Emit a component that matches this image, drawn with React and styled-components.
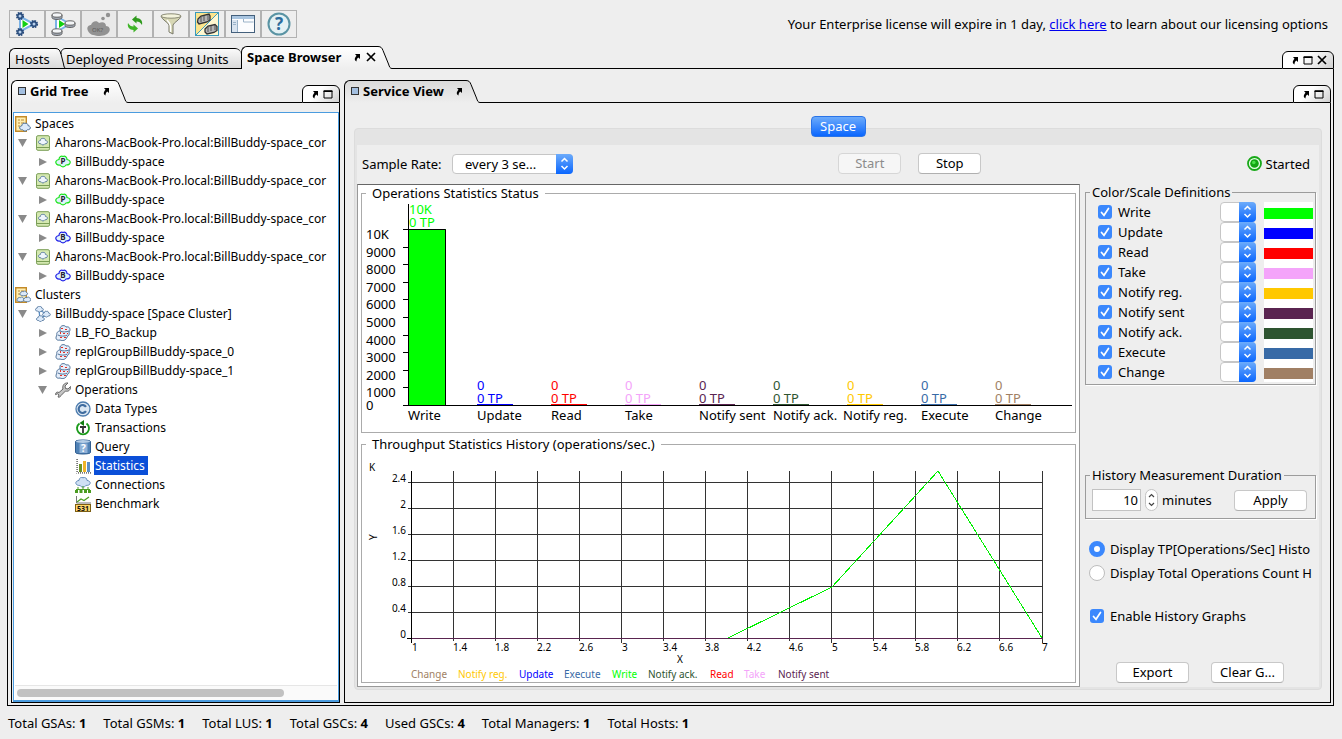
import React from "react";
import styled, { createGlobalStyle, css } from "styled-components";

const Global = createGlobalStyle`
  * { box-sizing: border-box; }
  body { margin: 0; background: #eeeeee; color: #000; font: 13px/16px "Noto Sans", "Open Sans", sans-serif; }
  button, select, input { font: inherit; color: inherit; }
  svg { display: block; }
`;

const Page = styled.div`
  min-height: 100vh;
  display: flex;
  flex-direction: column;
`;

/* ---------- header ---------- */
const Header = styled.header`
  display: flex;
  justify-content: space-between;
  align-items: center;
  padding: 10px 14px 8px 9px;
`;
const Toolbar = styled.div`
  display: flex;
`;
const ToolButton = styled.button`
  width: 36px;
  height: 28px;
  padding: 0;
  display: grid;
  place-items: center;
  border: 1px solid #b2b2b2;
  background: ${(p) => (p.disabled ? "#e9e9e9" : "#eeeeee")};
`;
const License = styled.p`
  margin: 0;
  white-space: nowrap;
  a { color: #0000ee; }
`;

/* ---------- tabbed frames ---------- */
const Strip = styled.div`
  display: flex;
  align-items: flex-end;
  height: 23px;
  margin: ${(p) => (p.$outer ? "0 8px 0 7px" : "0")};
`;
const Rule = styled.div`
  flex: ${(p) => (p.$short ? "0 0 2px" : "1")};
  border-bottom: 1px solid #000;
`;
const Tab = styled.div`
  display: flex;
  align-items: center;
  gap: 4px;
  flex: 0 0 ${(p) => p.$width}px;
  height: ${(p) => (p.$active ? 23 : 21)}px;
  padding: 0 0 0 5px;
  white-space: nowrap;
  border-top: 1px solid #000;
  border-left: 1px solid #000;
  border-top-left-radius: 6px;
  ${(p) =>
    p.$active &&
    css`
      font-weight: 700;
      padding-bottom: 2px;
      background: linear-gradient(${p.$shaded ? "#dadada, #eeeeee" : "#ffffff, #eeeeee"});
    `}
  ${(p) =>
    !p.$active &&
    css`
      border-bottom: 1px solid #000;
      background: linear-gradient(#fafafa, #d9d9d9);
    `}
  ${(p) =>
    p.$joined &&
    css`
      border-left: 0;
      border-radius: 0 6px 0 0;
      padding: 0;
    `}
`;
const TabActions = styled.span`
  display: flex;
  align-items: center;
  gap: 5px;
  margin-left: auto;
  margin-right: ${(p) => p.$right}px;
`;
const Controls = styled.div`
  display: flex;
  align-items: center;
  gap: 4px;
  height: 18px;
  padding: 0 6px 0 8px;
  border: 1px solid #000;
  border-radius: 6px 6px 0 0;
  background: linear-gradient(135deg, #ffffff 40%, #d0d0d0);
`;
const IconButton = styled.button`
  padding: 0;
  border: 0;
  background: none;
  display: block;
`;
const Frame = styled.main`
  flex: 1;
  display: flex;
  gap: 4px;
  margin: 0 8px 0 7px;
  padding: 11px 2px 2px 3px;
  border: 1px solid #000;
  border-top: 0;
`;
const Panel = styled.section`
  display: flex;
  flex-direction: column;
  min-width: 0;
  flex: ${(p) => (p.$side ? "0 0 329px" : "1")};
`;
const PanelBody = styled.div`
  flex: 1;
  display: flex;
  flex-direction: column;
  border: 1px solid #000;
  border-top: 0;
  padding: ${(p) => p.$pad};
`;

/* ---------- tree ---------- */
const TreeBox = styled.div`
  flex: 1;
  display: flex;
  flex-direction: column;
  background: #fff;
  border: 1px solid #4b9cdf;
  border-bottom-width: 2px;
  padding: 1px 1px 0 1px;
  overflow: hidden;
`;
const TreeList = styled.ul`
  flex: 1;
  list-style: none;
  margin: 0;
  padding: 0;
  overflow: hidden;
`;
const TreeRow = styled.li`
  display: flex;
  align-items: center;
  height: 19px;
  font-size: 12px;
  white-space: nowrap;
  padding-left: ${(p) => Math.max(0, p.$level - 1) * 20}px;
`;
const Twistie = styled.span`
  flex: 0 0 20px;
  padding-left: 3px;
`;
const TreeIcon = styled.span`
  flex: 0 0 19px;
`;
const TreeLabel = styled.span`
  height: 19px;
  line-height: 19px;
  padding: 0 3px 0 1px;
  ${(p) => p.$selected && css`background: #0b4fd8; color: #fff;`}
`;
const ScrollTrack = styled.div`
  height: 15px;
  padding: 3px 2px;
  border-top: 1px solid #e6e6e6;
  background: #fafafa;
`;
const ScrollThumb = styled.div`
  width: 84%;
  height: 8px;
  border-radius: 4px;
  background: #c1c1c1;
`;

/* ---------- service view ---------- */
const SpaceTab = styled.button`
  align-self: center;
  position: relative;
  width: 55px;
  height: 21px;
  margin-bottom: -9px;
  padding: 0 0 1px;
  line-height: 16px;
  color: #fff;
  border: 1px solid #2a74e8;
  border-radius: 4px;
  background: linear-gradient(#6cabfb, #0a66fe);
`;
const GroupBox = styled.div`
  flex: 1;
  display: flex;
  flex-direction: column;
  border: 1px solid #dcdcdc;
  border-radius: 4px;
  padding: 16px 2px 2px;
  background: #e4e4e4;
`;
const GroupInner = styled.div`
  flex: 1;
  display: flex;
  flex-direction: column;
  background: #eeeeee;
`;
const ServiceBar = styled.div`
  display: flex;
  align-items: center;
  height: 39px;
  padding: 0 9px 2px 5px;
`;
const BarLabel = styled.label`
  flex: 0 0 90px;
`;
const Spacer = styled.div`
  flex: 1;
`;
const Dropdown = styled.div`
  position: relative;
  display: flex;
  width: ${(p) => p.$width}px;
  height: 20px;
  select {
    appearance: none;
    width: 100%;
    padding: 0 0 0 ${(p) => (p.$width > 60 ? 12 : 2)}px;
    border: 1px solid #c6c6c6;
    border-radius: 4px;
    background: #fff;
  }
  svg {
    position: absolute;
    top: 0;
    right: 0;
    pointer-events: none;
  }
`;
const Button = styled.button`
  width: ${(p) => p.$width || 73}px;
  height: 21px;
  padding: 0 0 1px;
  line-height: 16px;
  border: 1px solid #c8c8c8;
  border-bottom-color: #b0b0b0;
  border-radius: 4px;
  background: #fff;
  &:disabled { color: #8c8c8c; background: #f6f6f6; border-color: #d6d6d6; }
`;
const Buttons = styled.div`
  display: flex;
  gap: ${(p) => p.$gap}px;
  padding-left: ${(p) => p.$indent || 0}px;
`;
const Status = styled.div`
  display: flex;
  align-items: center;
  gap: 4px;
`;
const Columns = styled.div`
  flex: 1;
  display: flex;
  gap: 5px;
`;
const ChartPane = styled.div`
  flex: 1;
  min-width: 0;
  display: flex;
  flex-direction: column;
  gap: 3px;
  padding: 0 3px 3px;
  border: 1px solid #999;
  border-top-color: #666;
  background: #fff;
`;
const ChartBox = styled.fieldset`
  margin: 0;
  padding: 0;
  min-width: 0;
  border: 1px solid #ababab;
  legend { margin-left: 4px; padding: 0 6px; }
  svg { width: 100%; height: auto; }
`;
const Side = styled.aside`
  flex: 0 0 234px;
  display: flex;
  flex-direction: column;
  overflow: hidden;
`;
const SideBox = styled.fieldset`
  width: 231px;
  min-width: 0;
  margin: 0 0 ${(p) => p.$below}px;
  padding: 0;
  border: 1px solid #9c9c9c;
  box-shadow: 1px 1px 0 #fff;
  legend { margin-left: 4px; padding: 0 2px; white-space: nowrap; }
`;
const ColorRows = styled.div`
  padding: 2px 2px 2px 12px;
`;
const ColorRow = styled.div`
  display: flex;
  align-items: center;
  height: 20px;
`;
const CheckLabel = styled.label`
  display: flex;
  align-items: center;
  flex: 1;
  gap: ${(p) => p.$gap || 6}px;
  white-space: nowrap;
`;
const Check = styled.input.attrs({ type: "checkbox" })`
  appearance: none;
  flex: 0 0 14px;
  height: 14px;
  margin: 0;
  border-radius: 3px;
  background: #3b88fd url("data:image/svg+xml,%3Csvg xmlns='http://www.w3.org/2000/svg' viewBox='0 0 14 14'%3E%3Cpath d='M3.5 7.5 6 10.3 10.5 3.5' fill='none' stroke='white' stroke-width='1.7' stroke-linecap='round'/%3E%3C/svg%3E");
`;
const Radio = styled.input.attrs({ type: "radio" })`
  appearance: none;
  flex: 0 0 16px;
  height: 16px;
  margin: 0;
  border-radius: 50%;
  border: 1px solid #bdbdbd;
  background: #fff;
  &:checked { border: 5px solid #3b88fd; }
`;
const Swatch = styled.div`
  width: 49px;
  height: 20px;
  margin-left: 8px;
  border: solid #fff;
  border-width: 6px 0 3px;
  background: ${(p) => p.$color};
`;
const Duration = styled.div`
  display: flex;
  align-items: center;
  padding: 6px 8px 7px 6px;
`;
const MinutesInput = styled.input`
  width: 49px;
  height: 22px;
  padding: 0 2px;
  text-align: right;
  border: 1px solid #c2c2c2;
  background: #fff;
`;
const Options = styled.div`
  display: flex;
  flex-direction: column;
  gap: 8px;
  padding-left: ${(p) => p.$indent}px;
  margin-bottom: ${(p) => p.$below}px;
`;

const Footer = styled.footer`
  display: flex;
  gap: 17px;
  padding: 9px 8px 8px;
`;

/* ---------- icons ---------- */
const Popout = () => (
  <svg width="8" height="9" viewBox="0 0 8 9">
    <path d="M2 1h5v5L5.300 4.500C4 5.500 3.500 6.500 3.500 8.500 1.500 7.500 1 5.500 3.500 2.800z" fill="#000" />
  </svg>
);
const Maximize = () => (
  <svg width="10" height="9" viewBox="0 0 10 9">
    <path d="M1 1h8v7H1z" fill="none" stroke="#000" />
    <path d="M.5 1.200h9" stroke="#000" strokeWidth="1.600" />
  </svg>
);
const Close = () => (
  <svg width="10" height="10" viewBox="0 0 10 10">
    <path d="M1 1l8 8M9 1L1 9" stroke="#000" strokeWidth="1.700" />
  </svg>
);
const PanelMark = () => (
  <svg width="9" height="9" viewBox="0 0 9 9">
    <rect x="1.500" y=".5" width="7" height="7" fill="#a3bfe0" stroke="#333" />
  </svg>
);
const Tail = ({ shaded }) => (
  <svg width="14" height="23" viewBox="0 0 14 23">
    <defs>
      <linearGradient id={shaded ? "tailS" : "tailP"} x2="0" y2="1">
        <stop stopColor={shaded ? "#dadada" : "#fff"} />
        <stop offset="1" stopColor="#eee" />
      </linearGradient>
    </defs>
    <path d="M0 .5C3 .5 4 2 5 4.500L10.500 18C11.500 21 12 22.500 14 22.500V23H0z" fill={`url(#${shaded ? "tailS" : "tailP"})`} />
    <path d="M0 .5C3 .5 4 2 5 4.500L10.500 18C11.500 21 12 22.500 14 22.500" fill="none" stroke="#000" />
  </svg>
);
const JoinTail = () => (
  <svg width="10" height="21" viewBox="0 0 10 21">
    <defs>
      <linearGradient id="join" x2="0" y2="1">
        <stop stopColor="#fafafa" />
        <stop offset="1" stopColor="#d9d9d9" />
      </linearGradient>
    </defs>
    <path d="M0 0h2l3 4 2-3 3-1v21H0z" fill="url(#join)" />
    <path d="M0 .5C3 .5 4 3 5 6L7.500 16C8 19 8.500 20.500 10 20.500M5 6C5 2 7 .5 10 .5M0 20.500h10" fill="none" stroke="#000" />
  </svg>
);
const ArrowCap = () => (
  <svg width="17" height="20" viewBox="0 0 17 20">
    <defs>
      <linearGradient id="cap" x2="0" y2="1">
        <stop stopColor="#6cabfb" />
        <stop offset="1" stopColor="#0a66fe" />
      </linearGradient>
    </defs>
    <path d="M0 0h13a4 4 0 0 1 4 4v12a4 4 0 0 1-4 4H0z" fill="url(#cap)" />
    <path d="M5.500 7.500l3-3 3 3M5.500 12l3 3 3-3" fill="none" stroke="#fff" strokeWidth="1.500" />
  </svg>
);
const StepArrows = () => (
  <svg width="13" height="22" viewBox="0 0 13 22">
    <rect x=".5" y=".5" width="12" height="21" rx="6" fill="#fff" stroke="#c2c2c2" />
    <path d="M4 8l2.500-2.500L9 8M4 14l2.500 2.500L9 14" fill="none" stroke="#444" strokeWidth="1.200" />
  </svg>
);
const StartedIcon = () => (
  <svg width="15" height="15" viewBox="0 0 15 15">
    <circle cx="7.500" cy="7.500" r="6.500" fill="#e9ffe9" stroke="#18a818" strokeWidth="1.800" />
    <circle cx="7.500" cy="7.500" r="4.300" fill="#14a614" />
    <circle cx="6.800" cy="6.500" r="1.800" fill="#4be04b" />
  </svg>
);
const Gear = ({ x, y }) => (
  <g transform={`translate(${x} ${y})`}>
    <circle r="3.200" fill="none" stroke="#26497a" strokeWidth="1.800" strokeDasharray="1.700 .8" />
    <circle r="2.200" fill="#b8d0ec" stroke="#26497a" strokeWidth="1.400" />
  </g>
);
const Disc = ({ x, y }) => (
  <g transform={`translate(${x} ${y})`} stroke="#555" strokeWidth=".9">
    <path d="M-5-1v2.500c0 2.600 10 2.600 10 0V-1z" fill="#a4acb8" />
    <ellipse cy="-1" rx="5" ry="2.200" fill="#f4f6f8" />
  </g>
);
const UP_ARROW = "M6 5.500L10.500 1.500V4C14.500 4 17 7 16 11 14.500 8.500 13 7.500 10.500 7.500V9.500z";
const TOOL_ICONS = {
  "Grid service": (
    <svg width="24" height="24" viewBox="0 0 24 24">
      <path d="M5 4.500l14 7.500L5 19.500z" fill="#fff" stroke="#7bb2e6" strokeWidth="2" />
      <path d="M7.500 8l6 4-6 4z" fill="#12d012" />
      <Gear x={5} y={4} /><Gear x={19} y={12} /><Gear x={5} y={20} />
    </svg>
  ),
  "Data grid": (
    <svg width="26" height="24" viewBox="0 0 26 24">
      <path d="M6 4l14 8L6 20z" fill="#fff" stroke="#7bb2e6" strokeWidth="2" />
      <path d="M9 8l6 4-6 4z" fill="#12d012" />
      <Disc x={7} y={4} /><Disc x={20} y={12} /><Disc x={7} y={20} />
    </svg>
  ),
  Acknowledge: (
    <svg width="26" height="24" viewBox="0 0 26 24">
      <path d="M2 19c-2-4 1-6 3-6 1-4 6-5 8-2 4-2 7 0 7 3 3 0 5 3 3 6-2 3-6 4-11 4-5-1-8-1-10-5z" fill="#929292" />
      <circle cx="17" cy="6.500" r="1.800" fill="#929292" /><circle cx="22" cy="3" r="2.200" fill="#929292" />
      <text x="6" y="20" fontSize="6" fill="#5c5c5c">OK?</text>
    </svg>
  ),
  Refresh: (
    <svg width="18" height="20" viewBox="0 0 18 20">
      <path d={UP_ARROW} fill="#2f9a1d" />
      <path d={UP_ARROW} transform="rotate(180 9 10)" fill="#3fb428" />
    </svg>
  ),
  Filter: (
    <svg width="22" height="22" viewBox="0 0 22 22">
      <path d="M1 3c1 4 7 6 8 9v7l4 2v-9c1-3 7-5 8-9z" fill="#d7d7b4" stroke="#79796a" />
      <ellipse cx="11" cy="3" rx="10" ry="2.200" fill="#f3f3dc" stroke="#8b8b76" />
      <path d="M7 7c2 2 3 3 3.500 6v6" fill="none" stroke="#fff" strokeWidth="1.400" />
    </svg>
  ),
  "Split view": (
    <svg width="24" height="24" viewBox="0 0 24 24">
      <rect x=".5" y=".5" width="23" height="23" fill="#fff8d0" stroke="#3a9abc" />
      <path d="M1 1h22L1 23z" fill="#fbe48c" /><path d="M23 1L1 23" stroke="#3a9abc" />
      <g fill="#b4b4b4" stroke="#333" strokeWidth="1.300">
        <path d="M3 7l3-3 8-2 1 2v4l-3 2-8 2-1.500-2z" />
        <path d="M10 17l3-3 7-1.500 2 2v4l-3 2-7 1.500-2-2z" />
      </g>
      <path d="M6 5v5M9 4v5M13 3v5M13 15v5M16 14v5M20 13v5" stroke="#555" />
    </svg>
  ),
  "Window layout": (
    <svg width="24" height="18" viewBox="0 0 24 18">
      <rect x=".5" y=".5" width="23" height="17" fill="#fbfcfe" stroke="#44607c" />
      <path d="M1 1h22v3H1z" fill="#a9c5e0" /><path d="M1 5h5v12H1z" fill="#d8e3ef" />
      <path d="M6.500 5v12M12.500 4v3h10M2 7.500h3M2 9.500h3" fill="none" stroke="#9ab2c8" />
    </svg>
  ),
  Help: (
    <svg width="24" height="24" viewBox="0 0 24 24">
      <circle cx="12" cy="12" r="10.500" fill="#e4f1f4" stroke="#5a94a4" strokeWidth="2" />
      <text x="12" y="18" textAnchor="middle" fontSize="17" fontWeight="700" fill="#2c6c9c">?</text>
    </svg>
  ),
};

const CLOUD = "M3 9C1 9 .5 6 3 5.500 3 3 6 2 8 3c2-2 5-1 5.500 1.500 3 .5 2.500 4 0 4.500C12 11 5 11 3 9z";
const BIG_CLOUD =
  "M1.500 10C0 8 1 6 4 5.500 4 2.500 6.500 1.500 8 2.500 10 1.500 12 3 12 5.500 15 6 16 8 14.500 10 13.500 11 12 11 11 11 9.500 13.500 6.500 13.500 5 11 4 11.200 2.500 11 1.500 10z";
const MiniCloud = ({ x, y, s = 0.55 }) => (
  <path d={CLOUD} transform={`translate(${x} ${y}) scale(${s})`} fill="#dceafa" stroke="#4a6e96" strokeWidth="1.500" />
);
const Sheet = () => <path d="M.7.700h10.600v14.600H.7z" fill="#ffeeb0" stroke="#c38a28" strokeWidth="1.400" />;
const TREE_ICONS = {
  spaces: (
    <>
      <Sheet />
      <path d="M3 4h2M6 4h3M3 7h2M6 7h3M3 10h2" stroke="#b98a38" />
      <path d={BIG_CLOUD} transform="translate(4 5.500) scale(.75)" fill="#dceafa" stroke="#4a6e96" strokeWidth="1.300" />
    </>
  ),
  clusters: (
    <>
      <Sheet />
      <path d="M3 4h2M6 4h3M3 7h2" stroke="#b98a38" />
      <MiniCloud x={4} y={3} /><MiniCloud x={1} y={9} /><MiniCloud x={7.500} y={9} />
    </>
  ),
  container: (
    <>
      <rect x="1.500" y=".7" width="13" height="14.600" rx="1.500" fill="#d4e8b0" stroke="#7a9e56" />
      <path d="M2 12.500h12" stroke="#7a9e56" />
      <path d={BIG_CLOUD} transform="translate(3 2) scale(.62)" fill="#eef5fc" stroke="#4a6e96" strokeWidth="1.300" />
    </>
  ),
  primary: (
    <>
      <path d={BIG_CLOUD} fill="#dff3fb" stroke="#1be41b" strokeWidth="1.200" />
      <text x="8" y="10" textAnchor="middle" fontSize="8" fontWeight="700" fill="#223">P</text>
    </>
  ),
  backup: (
    <>
      <path d={BIG_CLOUD} fill="#dff3fb" stroke="#2020e8" strokeWidth="1.200" />
      <text x="8" y="10" textAnchor="middle" fontSize="8" fontWeight="700" fill="#223">B</text>
    </>
  ),
  cluster: (
    <>
      <path d="M4 4l8 4-7 5z" fill="none" stroke="#5b8fc6" strokeWidth="1.300" />
      <path d={BIG_CLOUD} transform="translate(0 -1) scale(.55)" fill="#dceafa" stroke="#4a6e96" strokeWidth="1.500" />
      <path d={BIG_CLOUD} transform="translate(7 4) scale(.55)" fill="#dceafa" stroke="#4a6e96" strokeWidth="1.500" />
      <path d={BIG_CLOUD} transform="translate(1 8.500) scale(.55)" fill="#dceafa" stroke="#4a6e96" strokeWidth="1.500" />
    </>
  ),
  group: (
    <>
      <path d="M5 3c1-3 5-3 6-1 4-1 5 3 3 5 1 3-1 4-2 5-1 4-5 4-7 3-4 1-5-2-3-5-1-2 1-4 3-4z" fill="#e6eefa" stroke="#4f7299" />
      <path d="M5 6c2 1.500 7 1 9 0M3 10c2 1.500 7 1.500 9.500 0" fill="none" stroke="#4f7299" />
      <path d="M6 3h2v1H6zM10 4h2v1h-2zM8 8h2v1H8zM5 7h1v2H5zM12 8h1v1h-1zM5 12h2v1H5zM9 12h2v1H9z" fill="#e0322a" />
    </>
  ),
  wrench: (
    <path d="M13 1l-3 3 .5 2.500L13 7l2.500-2.500C16 8 13 10 10.500 9L6 13.500c-.5 1.500-2 2-3 1.500l1-2-1.500-1.200-2 .8C.5 10.500 2 9.500 4 10.500L8 7C7 4 9 .5 13 1z" fill="#c4c4c4" stroke="#666" />
  ),
  types: (
    <>
      <circle cx="8" cy="8" r="7" fill="#dbe7f3" stroke="#4d7cae" strokeWidth="1.300" />
      <path d="M11 5.800A4 4 0 1 0 11 10.200" fill="none" stroke="#3f6c9f" strokeWidth="2.200" />
    </>
  ),
  transactions: (
    <>
      <path d="M4.500 3.500A6 6 0 1 0 11.500 3.500" fill="none" stroke="#1a9a1a" strokeWidth="1.900" />
      <path d="M9 0v6L4.500 3z" fill="#0f7d0f" />
      <path d="M5 7h6M8 7v6" stroke="#333" strokeWidth="1.800" />
    </>
  ),
  query: (
    <>
      <path d="M.5 2.500C.5.500 15.500.500 15.500 2.500v11c0 2-15 2-15 0z" fill="#4f81b5" stroke="#2f5d90" />
      <ellipse cx="8" cy="2.500" rx="7" ry="1.500" fill="#b5cde6" />
      <rect x="4.500" y="4.500" width="8" height="9.500" fill="#8fb2d8" />
      <text x="8.500" y="13" textAnchor="middle" fontSize="10" fontWeight="700" fill="#fff">?</text>
    </>
  ),
  statistics: (
    <>
      <path d="M2.500 1v13.500H16" fill="none" stroke="#777" strokeDasharray="1 1" />
      <path d="M1.500 1v14.500H16" fill="none" stroke="#999" strokeDasharray="1 1" />
      <path d="M4 6h3v8H4z" fill="#6c9427" /><path d="M8 3h3v11H8z" fill="#f0b429" /><path d="M12 4h3v10h-3z" fill="#5d8fc4" />
    </>
  ),
  connections: (
    <>
      <path d={BIG_CLOUD} transform="translate(0 -1.500) scale(1 .9)" fill="#cfe0f4" stroke="#5d86b4" />
      <path d="M8 9v4M3 10v3M13 10v3M1 12.500h14" stroke="#4b9c22" />
      <path d="M0 13h3v3H0zM4.500 13h3v3h-3zM9 13h3v3H9zM13 13h3v3h-3z" fill="#4b9c22" />
    </>
  ),
  benchmark: (
    <>
      <path d="M1.500 0v7H16" fill="none" stroke="#777" />
      <path d="M2 6l4-3 3 1.500L14 1" fill="none" stroke="#4b9c22" strokeWidth="1.200" />
      <rect x=".5" y="8.500" width="15" height="7" fill="#ffd76a" stroke="#7d5f14" />
      <text x="8" y="15" textAnchor="middle" fontSize="7" fontWeight="700" fill="#111">531</text>
    </>
  ),
};

/* ---------- data ---------- */
const HOST = "Aharons-MacBook-Pro.local:BillBuddy-space_cor";
const TREE = [
  [0, "spaces", "Spaces"],
  [1, "container", HOST, "open"],
  [2, "primary", "BillBuddy-space", "closed"],
  [1, "container", HOST, "open"],
  [2, "primary", "BillBuddy-space", "closed"],
  [1, "container", HOST, "open"],
  [2, "backup", "BillBuddy-space", "closed"],
  [1, "container", HOST, "open"],
  [2, "backup", "BillBuddy-space", "closed"],
  [0, "clusters", "Clusters"],
  [1, "cluster", "BillBuddy-space [Space Cluster]", "open"],
  [2, "group", "LB_FO_Backup", "closed"],
  [2, "group", "replGroupBillBuddy-space_0", "closed"],
  [2, "group", "replGroupBillBuddy-space_1", "closed"],
  [2, "wrench", "Operations", "open"],
  [3, "types", "Data Types"],
  [3, "transactions", "Transactions"],
  [3, "query", "Query"],
  [3, "statistics", "Statistics"],
  [3, "connections", "Connections"],
  [3, "benchmark", "Benchmark"],
];
const COLORS = {
  Write: "#00ff00",
  Update: "#0000ff",
  Read: "#ff0000",
  Take: "#f4a4fa",
  "Notify reg.": "#ffc800",
  "Notify sent": "#5a2450",
  "Notify ack.": "#2e5430",
  Execute: "#386aa6",
  Change: "#a07f64",
};
const BARS = [
  ["Update", 115], ["Read", 189], ["Take", 263], ["Notify sent", 337],
  ["Notify ack.", 411], ["Notify reg.", 485], ["Execute", 559], ["Change", 633],
];
const LEGEND = [
  ["Change", 49], ["Notify reg.", 96], ["Update", 157], ["Execute", 202], ["Write", 250],
  ["Notify ack.", 286], ["Read", 348], ["Take", 382], ["Notify sent", 416],
];
const TOTALS = [
  ["Total GSAs", 1], ["Total GSMs", 1], ["Total LUS", 1], ["Total GSCs", 4],
  ["Used GSCs", 4], ["Total Managers", 1], ["Total Hosts", 1],
];

const StatusChart = () => (
  <svg viewBox="0 0 713 231" fontSize="13">
    <rect x="46" y="28" width="38" height="176" fill={COLORS.Write} />
    <path d="M46.500 3v202M41 204.500h669M46 28.500h37.500V204" fill="none" stroke="#000" />
    {[...Array(10)].map((_, i) => {
      const y = Math.round(28 + i * 17.6);
      return (
        <g key={i}>
          <rect x="41" y={y} width="5" height="1" />
          <text x="4" y={y + 10}>{i === 0 ? "10K" : (10 - i) * 1000}</text>
        </g>
      );
    })}
    <text x="4" y="209">0</text>
    <g fill={COLORS.Write}>
      <text x="47" y="13">10K</text>
      <text x="47" y="26">0 TP</text>
    </g>
    <text x="46" y="219">Write</text>
    {BARS.map(([name, x]) => (
      <g key={name}>
        <g fill={COLORS[name]}>
          <text x={x} y="189">0</text>
          <text x={x} y="202">0 TP</text>
          <rect x={x} y="203" width="36" height="1" />
        </g>
        <text x={name === "Notify reg." ? x - 4 : x} y="219">{name}</text>
      </g>
    ))}
  </svg>
);

const HistoryChart = () => (
  <svg viewBox="0 0 713 230" fontSize="10">
    {[...Array(6)].map((_, i) => (
      <rect key={i} x="46" y={30 + i * 26} width="635" height="1" fill="#333" />
    ))}
    {[...Array(16)].map((_, i) => (
      <g key={i}>
        <rect x={49 + i * 42 + (i === 15 ? 1 : 0)} y="19" width="1" height={i % 5 ? 170 : 172} fill={i ? "#333" : "#000"} />
        <text x={(i % 5 ? 49 : 50) + i * 42} y="199">{+(1 + i * 0.4).toFixed(1)}</text>
      </g>
    ))}
    {["2.4", "2", "1.6", "1.2", "0.8", "0.4", "0"].map((t, i) => (
      <text key={t} x="44" y={30 + i * 26} textAnchor="end">{t}</text>
    ))}
    <rect x="45" y="186" width="5" height="1" />
    <rect x="50" y="186" width="631" height="1" fill="#5a2450" />
    <polyline points="366,186 470,135 576,19 680,186" fill="none" stroke="#00f000" shapeRendering="crispEdges" />
    <text x="7" y="19">K</text>
    <text x="315" y="211">X</text>
    <text transform="translate(15 88) rotate(-90)">Y</text>
    {LEGEND.map(([name, x]) => (
      <text key={name} x={x} y="226" fill={COLORS[name]}>{name}</text>
    ))}
  </svg>
);

export default function App() {
  return (
    <Page>
      <Global />
      <Header>
        <Toolbar>
          {Object.entries(TOOL_ICONS).map(([name, icon]) => (
            <ToolButton key={name} aria-label={name} disabled={name === "Acknowledge"}>{icon}</ToolButton>
          ))}
        </Toolbar>
        <License>
          Your Enterprise license will expire in 1 day, <a href="#license">click here</a> to learn about our licensing options
        </License>
      </Header>

      <Strip $outer>
        <Rule $short />
        <Tab $width={47}>Hosts</Tab>
        <JoinTail />
        <Tab $joined $width={175}>Deployed Processing Units</Tab>
        <Tab $active $width={137}>
          Space Browser
          <TabActions $right={2}>
            <IconButton aria-label="Pop out"><Popout /></IconButton>
            <IconButton aria-label="Close"><Close /></IconButton>
          </TabActions>
        </Tab>
        <Tail />
        <Rule />
        <Controls>
          <IconButton aria-label="Pop out"><Popout /></IconButton>
          <IconButton aria-label="Maximize"><Maximize /></IconButton>
          <IconButton aria-label="Close"><Close /></IconButton>
        </Controls>
      </Strip>

      <Frame>
        <Panel $side>
          <Strip>
            <Tab $active $width={103}>
              <PanelMark />Grid Tree
              <TabActions $right={4}>
                <IconButton aria-label="Pop out"><Popout /></IconButton>
              </TabActions>
            </Tab>
            <Tail />
            <Rule />
            <Controls>
              <IconButton aria-label="Pop out"><Popout /></IconButton>
              <IconButton aria-label="Maximize"><Maximize /></IconButton>
            </Controls>
          </Strip>
          <PanelBody $pad="9px 0 0 1px">
            <TreeBox>
              <TreeList>
                {TREE.map(([level, icon, label, state], i) => (
                  <TreeRow key={i} $level={level}>
                    {level > 0 && (
                      <Twistie>
                        {state && (
                          <svg width="10" height="10" viewBox="0 0 10 10">
                            <path d={state === "open" ? "M0 1h9L4.500 9z" : "M1 1l8 4-8 4z"} fill="#8a8a8a" />
                          </svg>
                        )}
                      </Twistie>
                    )}
                    <TreeIcon><svg width="16" height="16" viewBox="0 0 16 16">{TREE_ICONS[icon]}</svg></TreeIcon>
                    <TreeLabel $selected={label === "Statistics"}>{label}</TreeLabel>
                  </TreeRow>
                ))}
              </TreeList>
              <ScrollTrack><ScrollThumb /></ScrollTrack>
            </TreeBox>
          </PanelBody>
        </Panel>

        <Panel>
          <Strip>
            <Tab $active $shaded $width={122}>
              <PanelMark />Service View
              <TabActions $right={3}>
                <IconButton aria-label="Pop out"><Popout /></IconButton>
              </TabActions>
            </Tab>
            <Tail shaded />
            <Rule />
            <Controls>
              <IconButton aria-label="Pop out"><Popout /></IconButton>
              <IconButton aria-label="Maximize"><Maximize /></IconButton>
            </Controls>
          </Strip>
          <PanelBody $pad="13px 8px 12px 9px">
            <SpaceTab>Space</SpaceTab>
            <GroupBox>
              <GroupInner>
                <ServiceBar>
                  <BarLabel htmlFor="rate">Sample Rate:</BarLabel>
                  <Dropdown $width={121}>
                    <select id="rate"><option>every 3 se...</option></select>
                    <ArrowCap />
                  </Dropdown>
                  <Spacer />
                  <Buttons $gap={17}>
                    <Button $width={63} disabled>Start</Button>
                    <Button $width={63}>Stop</Button>
                  </Buttons>
                  <Spacer />
                  <Status><StartedIcon />Started</Status>
                </ServiceBar>
                <Columns>
                  <ChartPane>
                    <ChartBox>
                      <legend>Operations Statistics Status</legend>
                      <StatusChart />
                    </ChartBox>
                    <ChartBox>
                      <legend>Throughput Statistics History (operations/sec.)</legend>
                      <HistoryChart />
                    </ChartBox>
                  </ChartPane>
                  <Side>
                    <SideBox $below={82}>
                      <legend>Color/Scale Definitions</legend>
                      <ColorRows>
                        {Object.entries(COLORS).map(([name, color]) => (
                          <ColorRow key={name}>
                            <CheckLabel><Check defaultChecked />{name}</CheckLabel>
                            <Dropdown $width={36}>
                              <select aria-label={`${name} scale`}><option></option></select>
                              <ArrowCap />
                            </Dropdown>
                            <Swatch $color={color} />
                          </ColorRow>
                        ))}
                      </ColorRows>
                    </SideBox>
                    <SideBox $below={22}>
                      <legend>History Measurement Duration</legend>
                      <Duration>
                        <CheckLabel $gap={4}>
                          <MinutesInput defaultValue="10" />
                          <StepArrows />
                          minutes
                        </CheckLabel>
                        <Button>Apply</Button>
                      </Duration>
                    </SideBox>
                    <Options $indent={4} $below={27}>
                      <CheckLabel $gap={5}><Radio name="mode" defaultChecked />Display TP[Operations/Sec] Histo</CheckLabel>
                      <CheckLabel $gap={5}><Radio name="mode" />Display Total Operations Count H</CheckLabel>
                    </Options>
                    <Options $indent={5} $below={38}>
                      <CheckLabel><Check defaultChecked />Enable History Graphs</CheckLabel>
                    </Options>
                    <Buttons $gap={22} $indent={31}>
                      <Button>Export</Button>
                      <Button>Clear G...</Button>
                    </Buttons>
                  </Side>
                </Columns>
              </GroupInner>
            </GroupBox>
          </PanelBody>
        </Panel>
      </Frame>

      <Footer>
        {TOTALS.map(([name, n]) => (
          <span key={name}>{name}: <b>{n}</b></span>
        ))}
      </Footer>
    </Page>
  );
}
